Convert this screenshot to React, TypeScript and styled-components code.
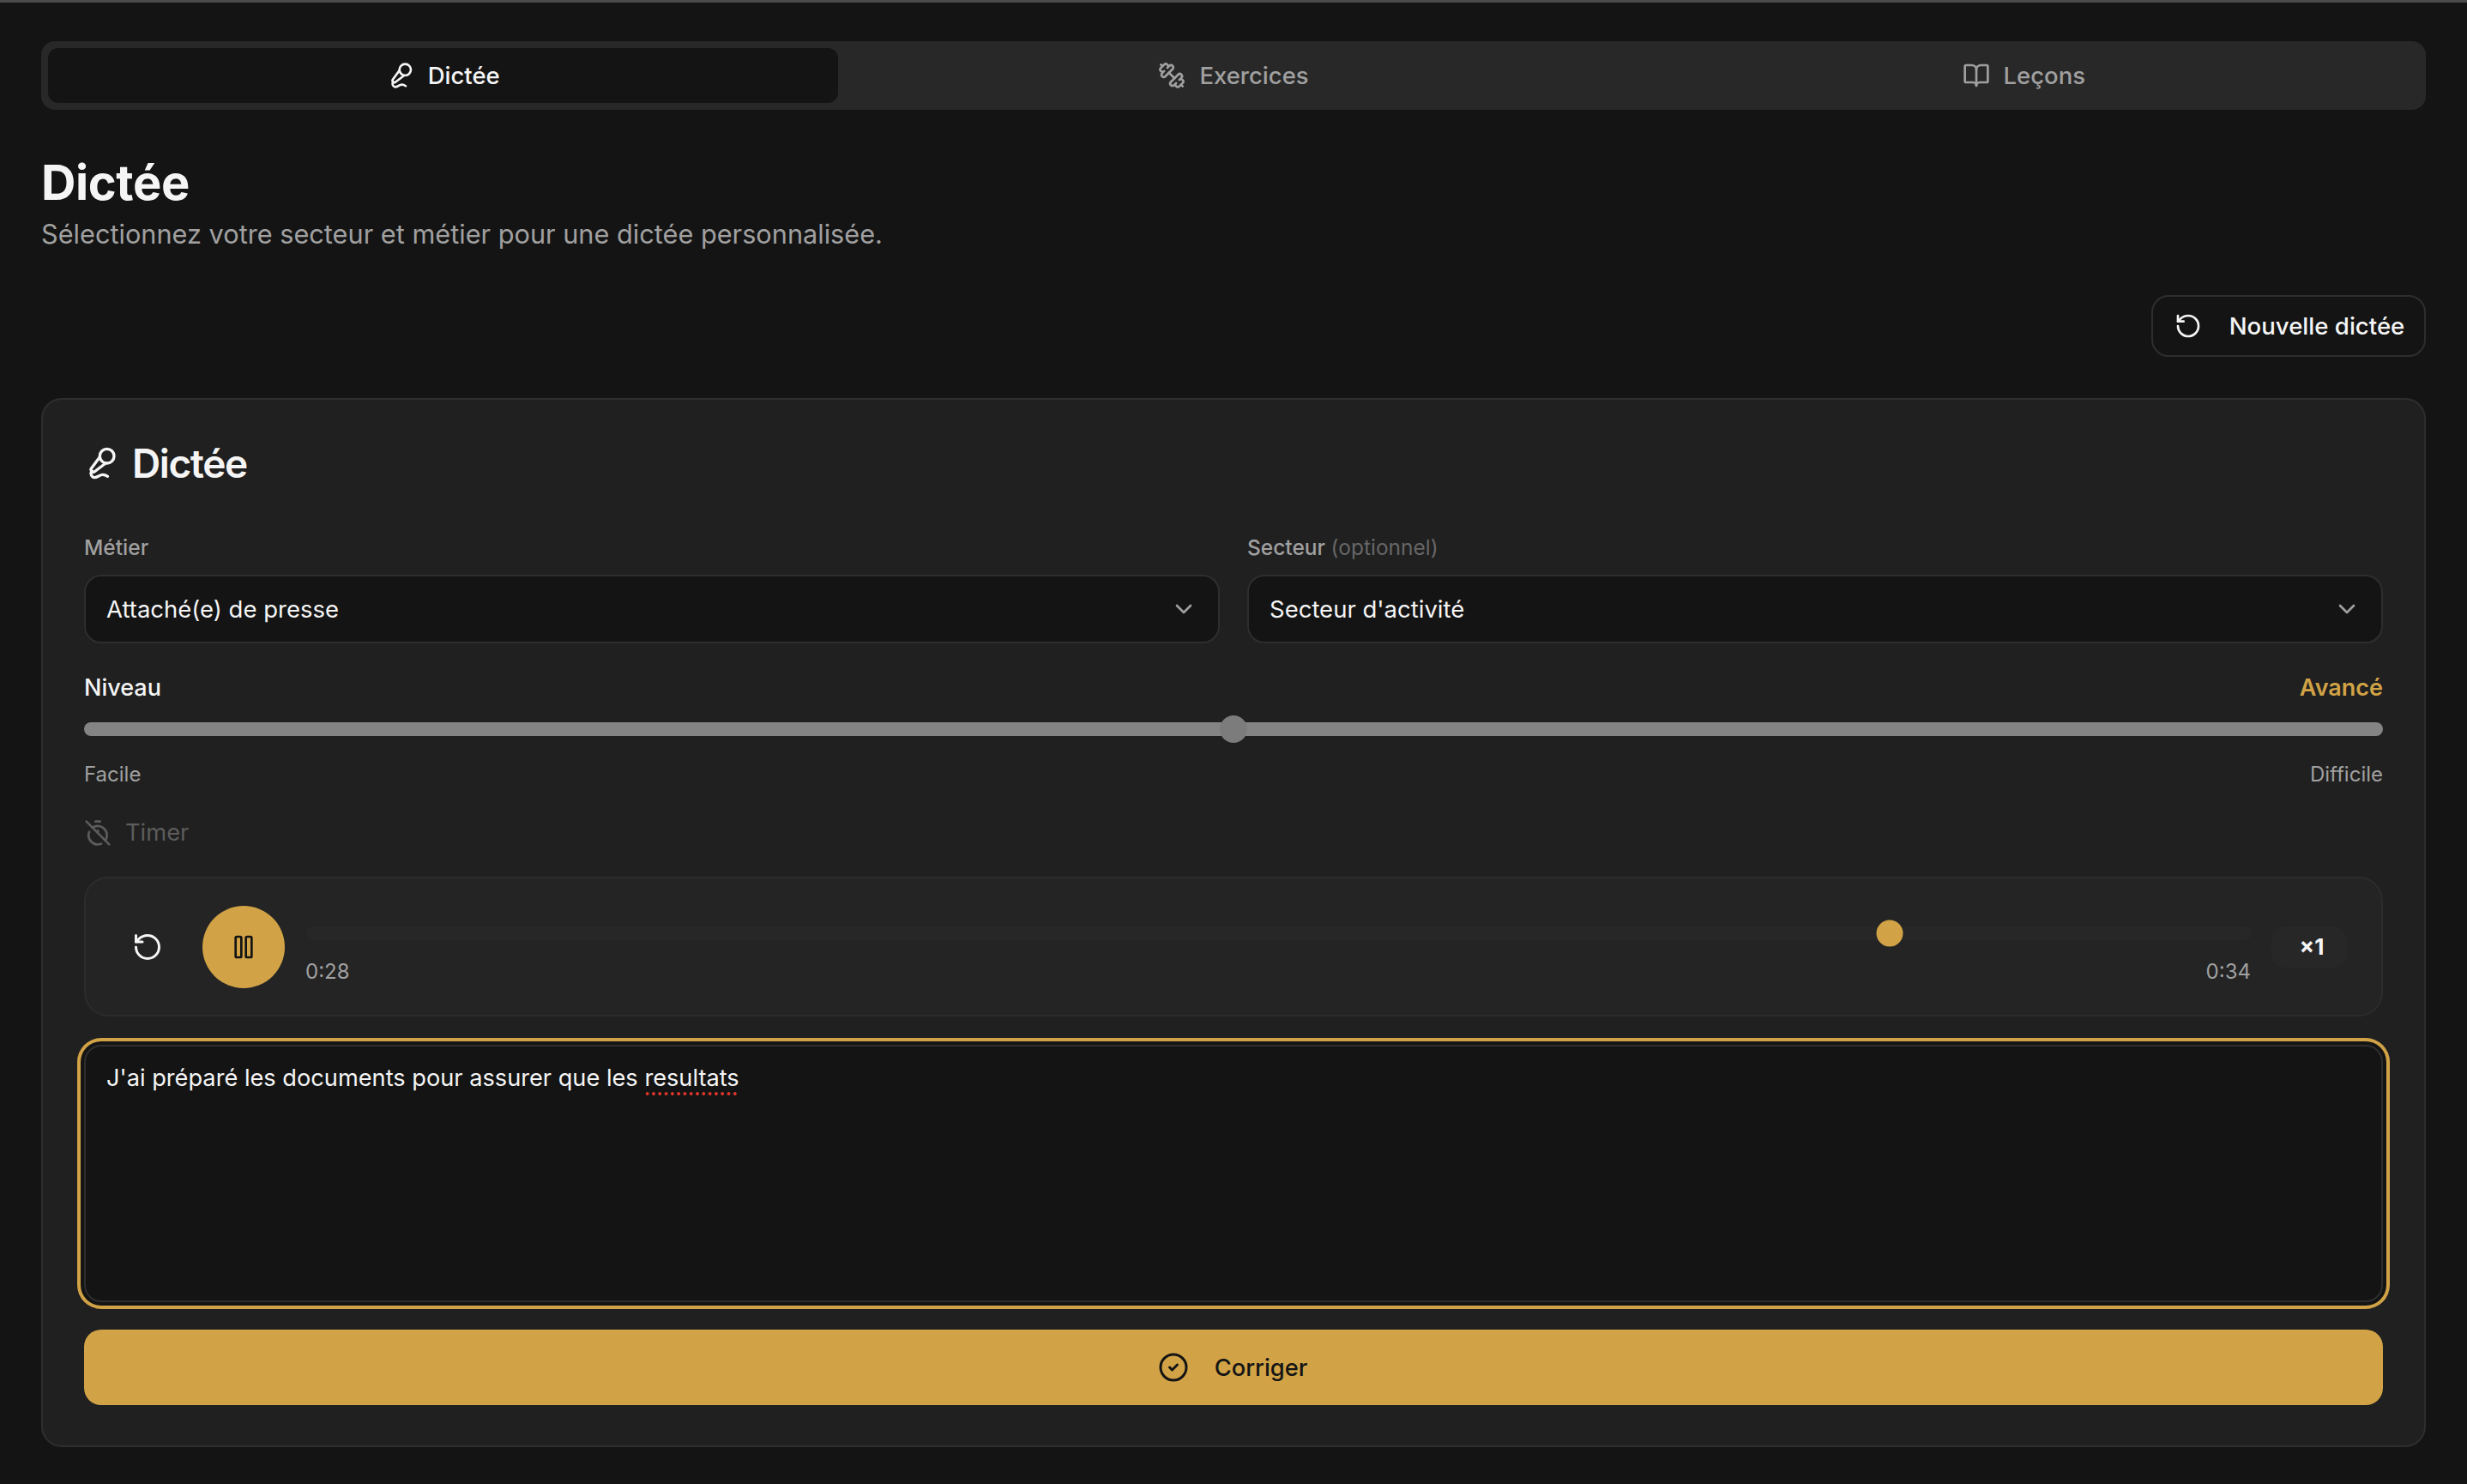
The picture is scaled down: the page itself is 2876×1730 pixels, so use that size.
import React from 'react';
import styled, { createGlobalStyle } from 'styled-components';
import { MicVocal, Dumbbell, BookOpen, RotateCcw, ChevronDown, TimerOff, Pause, CircleCheck } from 'lucide-react';

const Global = createGlobalStyle`
  html, body { margin: 0; padding: 0; background: #141414; }
  body { font-family: Inter, "Noto Sans", sans-serif; color: #f5f5f5; -webkit-font-smoothing: antialiased; }
  * { box-sizing: border-box; }
`;

const TopLine = styled.div`
  height: 3px;
  background: #4a4a4a;
`;

const Page = styled.main`
  height: 1727px;
  padding: 45px 48px 0;
  display: flex;
  flex-direction: column;
  background: #141414;
`;

const TabBar = styled.nav`
  height: 80px;
  padding: 8px;
  display: grid;
  grid-template-columns: repeat(3, 1fr);
  background: #282828;
  border-radius: 16px;
`;

const Tab = styled.button<{ $active?: boolean }>`
  border: 0;
  border-radius: 12px;
  display: flex;
  align-items: center;
  justify-content: center;
  gap: 16px;
  font: 500 27.5px Inter, sans-serif;
  color: ${p => (p.$active ? '#f5f5f5' : '#a0a0a0')};
  background: ${p => (p.$active ? '#141414' : 'transparent')};
`;

const FlippedDumbbell = styled(Dumbbell)`
  transform: scaleX(-1);
`;

const Title = styled.h1`
  margin: 49px 0 0;
  font: 700 56px/72px Inter, sans-serif;
  letter-spacing: -0.4px;
  color: #f5f5f5;
`;

const Subtitle = styled.p`
  margin: 0;
  font: 400 30.7px/48px Inter, sans-serif;
  color: #a0a0a0;
`;

const Actions = styled.div`
  margin-top: 47px;
  display: flex;
  justify-content: flex-end;
`;

const OutlineButton = styled.button`
  height: 72px;
  width: 320px;
  padding: 0 0 0 2px;
  border: 2px solid #2e2e2e;
  border-radius: 20px;
  background: #141414;
  color: #f5f5f5;
  font: 500 27.6px Inter, sans-serif;
  display: flex;
  align-items: center;
  justify-content: center;
  gap: 32px;
`;

const Card = styled.section`
  margin-top: 48px;
  height: 1223px;
  padding: 48px 48px 47px;
  background: #202020;
  border: 2px solid #2e2e2e;
  border-radius: 24px;
  display: flex;
  flex-direction: column;
`;

const CardTitle = styled.h2`
  margin: 0;
  height: 52px;
  display: flex;
  align-items: center;
  gap: 16px;
  font: 600 46px/52px Inter, sans-serif;
  letter-spacing: -1.4px;
  color: #f5f5f5;
`;

const FieldGrid = styled.div`
  margin-top: 56px;
  display: grid;
  grid-template-columns: 1fr 1fr;
  gap: 32px;
`;

const Field = styled.div`
  display: flex;
  flex-direction: column;
  gap: 16px;
`;

const Label = styled.label`
  font: 500 24.5px/32px Inter, sans-serif;
  color: #a0a0a0;
`;

const Muted = styled.span`
  color: #666;
  font-weight: 400;
`;

const Select = styled.div`
  height: 80px;
  padding: 0 24px;
  display: flex;
  align-items: center;
  justify-content: space-between;
  background: #141414;
  border: 2px solid #2e2e2e;
  border-radius: 20px;
  font: 400 27.5px Inter, sans-serif;
  color: #f5f5f5;
`;

const LevelRow = styled.div`
  margin-top: 32px;
  display: flex;
  justify-content: space-between;
  font: 500 27px/40px Inter, sans-serif;
  color: #f5f5f5;
`;

const LevelValue = styled.span`
  color: #d1a346;
  font-weight: 600;
`;

const SliderTrack = styled.div`
  position: relative;
  margin-top: 20px;
  height: 16px;
  border-radius: 8px;
  background: #848484;
`;

const SliderThumb = styled.div<{ $at: number }>`
  position: absolute;
  top: 50%;
  left: ${p => p.$at}%;
  width: 32px;
  height: 32px;
  border-radius: 50%;
  background: #7c7c7c;
  transform: translate(-50%, -50%);
`;

const ScaleRow = styled.div`
  margin-top: 29px;
  display: flex;
  justify-content: space-between;
  font: 400 24px/32px Inter, sans-serif;
  color: #a0a0a0;
`;

const TimerRow = styled.div`
  margin-top: 32px;
  display: flex;
  align-items: center;
  gap: 16px;
  font: 400 27.3px/40px Inter, sans-serif;
  color: #5c5c5c;
`;

const Player = styled.div`
  margin-top: 31px;
  height: 163px;
  padding: 0 40px 0 36px;
  display: flex;
  align-items: center;
  background: #242424;
  border: 2px solid #2c2c2c;
  border-radius: 28px;
`;

const ReplayButton = styled.button`
  width: 72px;
  height: 72px;
  padding: 0;
  border: 0;
  background: transparent;
  color: #f5f5f5;
  display: flex;
  align-items: center;
  justify-content: center;
`;

const PlayButton = styled.button`
  margin-left: 28px;
  width: 96px;
  height: 96px;
  padding: 0;
  border: 0;
  border-radius: 50%;
  background: #d1a346;
  color: #141414;
  display: flex;
  align-items: center;
  justify-content: center;
`;

const Progress = styled.div`
  margin-left: 25px;
  flex: 1;
  display: flex;
  flex-direction: column;
  align-self: flex-start;
  padding-top: 56px;
`;

const ProgressTrack = styled.div`
  position: relative;
  height: 16px;
  border-radius: 8px;
  background: #272727;
`;

const ProgressThumb = styled.div<{ $at: number }>`
  position: absolute;
  top: 50%;
  left: ${p => p.$at}%;
  width: 31px;
  height: 31px;
  border-radius: 50%;
  background: #d1a346;
  transform: translate(-50%, -50%);
`;

const Times = styled.div`
  margin: 21px 1px 0 -1px;
  display: flex;
  justify-content: space-between;
  font: 400 24px/32px Inter, sans-serif;
  color: #a0a0a0;
`;

const SpeedButton = styled.button`
  margin-left: 23px;
  width: 88px;
  height: 48px;
  padding: 0 0 0 6px;
  border: 0;
  border-radius: 16px;
  background: #272727;
  color: #f5f5f5;
  font: 700 26px Inter, sans-serif;
`;

const Answer = styled.div`
  margin-top: 33px;
  height: 300px;
  padding: 21px 24px 24px;
  background: #141414;
  border: 2px solid #2e2e2e;
  border-radius: 20px;
  box-shadow: 0 0 0 4px #141414, 0 0 0 8px #d1a346;
  font: 400 27.2px/32px Inter, sans-serif;
  color: #f5f5f5;
`;

const Misspelled = styled.span`
  padding-bottom: 6px;
  background-image: radial-gradient(circle at center, #e0342b 1.7px, transparent 2.1px);
  background-size: 7.3px 4px;
  background-repeat: repeat-x;
  background-position: 0 calc(100% - 2px);
`;

const SubmitButton = styled.button`
  margin-top: 32px;
  height: 88px;
  padding: 0 2px 0 0;
  border: 0;
  border-radius: 20px;
  background: #d1a346;
  color: #141414;
  font: 500 27.3px Inter, sans-serif;
  display: flex;
  align-items: center;
  justify-content: center;
  gap: 30px;
`;

export default function App() {
  return (
    <>
      <Global />
      <TopLine />
      <Page>
        <TabBar>
          <Tab $active><MicVocal size={32} strokeWidth={2} />Dictée</Tab>
          <Tab><FlippedDumbbell size={32} strokeWidth={2} />Exercices</Tab>
          <Tab><BookOpen size={32} strokeWidth={2} />Leçons</Tab>
        </TabBar>
        <Title>Dictée</Title>
        <Subtitle>Sélectionnez votre secteur et métier pour une dictée personnalisée.</Subtitle>
        <Actions>
          <OutlineButton><RotateCcw size={32} strokeWidth={2} />Nouvelle dictée</OutlineButton>
        </Actions>
        <Card>
          <CardTitle><MicVocal size={40} strokeWidth={2} />Dictée</CardTitle>
          <FieldGrid>
            <Field>
              <Label>Métier</Label>
              <Select>Attaché(e) de presse<ChevronDown size={32} color="#a0a0a0" /></Select>
            </Field>
            <Field>
              <Label>Secteur <Muted>(optionnel)</Muted></Label>
              <Select>Secteur d'activité<ChevronDown size={32} color="#a0a0a0" /></Select>
            </Field>
          </FieldGrid>
          <LevelRow><span>Niveau</span><LevelValue>Avancé</LevelValue></LevelRow>
          <SliderTrack><SliderThumb $at={50} /></SliderTrack>
          <ScaleRow><span>Facile</span><span>Difficile</span></ScaleRow>
          <TimerRow><TimerOff size={32} />Timer</TimerRow>
          <Player>
            <ReplayButton><RotateCcw size={36} strokeWidth={2} /></ReplayButton>
            <PlayButton><Pause size={32} strokeWidth={2} /></PlayButton>
            <Progress>
              <ProgressTrack><ProgressThumb $at={81.4} /></ProgressTrack>
              <Times><span>0:28</span><span>0:34</span></Times>
            </Progress>
            <SpeedButton>×1</SpeedButton>
          </Player>
          <Answer>J'ai préparé les documents pour assurer que les <Misspelled>resultats</Misspelled></Answer>
          <SubmitButton><CircleCheck size={36} strokeWidth={2} />Corriger</SubmitButton>
        </Card>
      </Page>
    </>
  );
}
